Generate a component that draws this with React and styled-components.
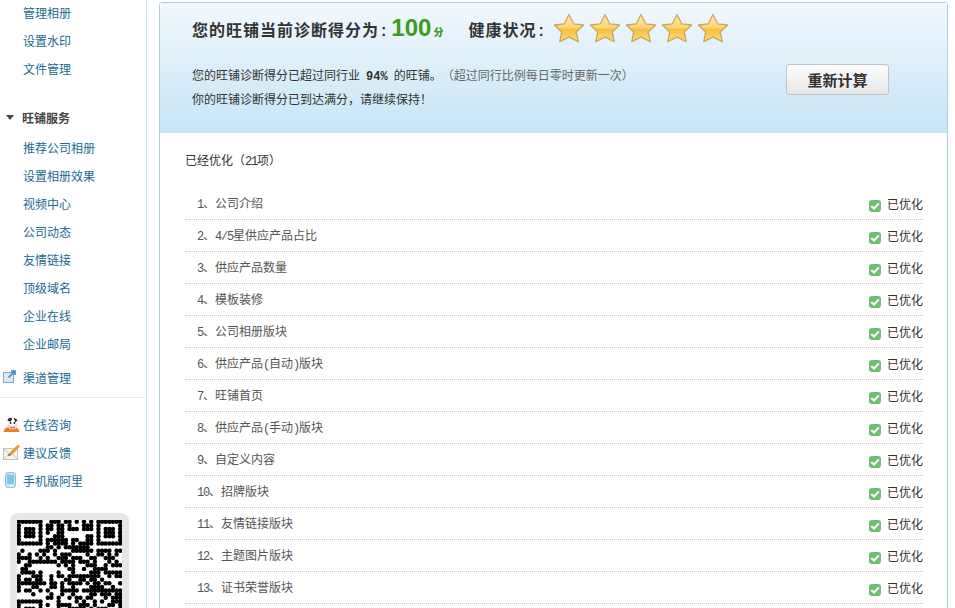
import React from "react";
import styled, { createGlobalStyle } from "styled-components";

const Global = createGlobalStyle`
  html, body { margin: 0; padding: 0; background: #fff; overflow: hidden; }
  body {
    font-family: "Noto Sans CJK SC", "Liberation Sans", sans-serif;
    font-size: 12px;
    color: #333;
    text-spacing-trim: space-all;
  }
`;

const Page = styled.div`
  display: flex;
  width: 955px;
  height: 608px;
  overflow: hidden;
  background: #fff;
`;

const Sidebar = styled.aside`
  flex: 0 0 146px;
  border-right: 1px solid #d5e6ee;
  overflow: hidden;
`;

const NavList = styled.ul`
  list-style: none;
  margin: ${p => p.$top || 0}px 0 0;
  padding: 0;
`;

const NavItem = styled.li`
  display: flex;
  align-items: center;
  height: 28px;
  color: #206a8e;
  padding-left: 3px;
  font-size: 12px;
`;

const NavIcon = styled.span`
  display: flex;
  align-items: center;
  flex: 0 0 20px;
  height: 20px;
`;

const NavSpacer = styled.span`
  flex: 0 0 20px;
`;

const NavHeading = styled.div`
  display: flex;
  align-items: center;
  height: 32px;
  margin-top: 19px;
  padding-left: 6px;
  gap: 8px;
  font-weight: 700;
  font-size: 12px;
  color: #444;
`;

const Caret = styled.i`
  width: 0;
  height: 0;
  border-left: 4.5px solid transparent;
  border-right: 4.5px solid transparent;
  border-top: 5px solid #444;
`;

const Divider = styled.hr`
  border: 0;
  height: 1px;
  margin: 6px 1px 12px 0;
  background: #e2ecf1;
`;

const QrBox = styled.div`
  width: 105px;
  height: 120px;
  margin: 19px 0 0 10px;
  padding: 7px;
  background: #e6e6e6;
  border-radius: 8px;
`;

const QrSheet = styled.div`
  background: #fff;
  width: 105px;
  height: 120px;
`;

const Main = styled.main`
  flex: 0 0 789px;
  box-sizing: border-box;
  height: 640px;
  margin: 2px 0 0 12px;
  border: 1px solid #a9d0de;
  border-radius: 3px 3px 0 0;
`;

const Header = styled.section`
  box-sizing: border-box;
  height: 131px;
  padding: 10px 58px 0 32px;
  background: linear-gradient(#f1f8fc, #c6e5f7);
  border-bottom: 1px solid #fff;
`;

const TitleRow = styled.div`
  display: flex;
  align-items: center;
  height: 30px;
  font-size: 16px;
  font-weight: 700;
  color: #333;
`;

const TitleText = styled.span`
  letter-spacing: 1px;
  margin-top: 2px;
`;

const Colon = styled.span`
  font-family: "Liberation Sans", sans-serif;
  margin-left: 2px;
`;

const Score = styled.b`
  margin-left: 4px;
  font-family: "Liberation Sans", sans-serif;
  font-size: 24px;
  color: #3f9a1c;
`;

const ScoreUnit = styled.b`
  margin: 7px 0 0 2px;
  font-size: 10px;
  color: #3f9a1c;
`;

const Health = styled(TitleText)`
  margin-left: 25px;
  margin-right: 8px;
`;

const Stars = styled.span`
  display: flex;
  gap: 4px;
`;

const InfoRow = styled.div`
  display: flex;
  justify-content: space-between;
  align-items: flex-start;
  margin-top: 20px;
`;

const Lines = styled.div`
  font-size: 12px;
  color: #333;
`;

const Line = styled.div`
  height: 24px;
  line-height: 24px;
`;

const Muted = styled.span`
  color: #666;
`;

const Strong = styled.b`
  font-family: "Liberation Mono", monospace;
  font-size: 12px;
  line-height: 1;
  margin: 0 6px;
`;

const Recalc = styled.button`
  width: 103px;
  height: 31px;
  margin-top: 1px;
  padding: 0;
  border: 1px solid #bcc6cc;
  border-radius: 3px;
  background: linear-gradient(#fdfdfd, #e6e6e6);
  font-family: inherit;
  font-size: 15px;
  font-weight: 700;
  color: #333;
`;

const Body = styled.section`
  padding: 16px 24px 0 25px;
`;

const SectionTitle = styled.div`
  height: 20px;
  line-height: 20px;
  color: #333;
`;

const Rows = styled.ol`
  list-style: none;
  margin: 18px 0 0;
  padding: 0;
`;

const Row = styled.li`
  box-sizing: border-box;
  display: flex;
  align-items: center;
  justify-content: space-between;
  height: 32px;
  padding: 0 0 1px 12px;
  border-bottom: 1px dotted #c6c6c6;
  color: #555;
`;

const Name = styled.span`
  margin-top: -1px;
`;

const Latin = styled.span`
  font-family: "Liberation Mono", monospace;
  font-size: 12px;
  line-height: 1;
  letter-spacing: -1.2px;
`;

const Status = styled.span`
  display: flex;
  align-items: center;
  gap: 6px;
  color: #333;
  margin-top: 1px;
`;

const CheckWrap = styled.span`
  display: flex;
  margin-top: 4px;
`;

const StarIcon = () => (
  <svg width="32" height="30" viewBox="0 0 32 30" aria-hidden="true">
    <defs>
      <linearGradient id="starFill" x1="0" y1="0" x2="0" y2="1">
        <stop offset="0" stopColor="#ffeeb0" />
        <stop offset="0.48" stopColor="#fdd670" />
        <stop offset="0.55" stopColor="#f8bd42" />
        <stop offset="1" stopColor="#fedd7c" />
      </linearGradient>
    </defs>
    <path
      d="M16 1.5 L20.6 10.8 L30.6 12 L23.3 19 L25.2 28.6 L16 24.2 L6.8 28.6 L8.7 19 L1.4 12 L11.4 10.8 Z"
      fill="url(#starFill)"
      stroke="#c9a75e"
      strokeWidth="1.3"
      strokeLinejoin="round"
    />
  </svg>
);

const CheckIcon = () => (
  <svg width="12" height="12" viewBox="0 0 12 12" aria-hidden="true">
    <rect width="12" height="12" rx="3" fill="#6bbf6e" />
    <path d="M2.4 6 L5 8.6 L9.8 3.4" fill="none" stroke="#fff" strokeWidth="2" />
  </svg>
);

const ExternalIcon = () => (
  <svg width="14" height="14" viewBox="0 0 14 14" aria-hidden="true">
    <rect x="0.5" y="2.5" width="10" height="10" fill="#dbe7f2" stroke="#8ba6c0" />
    <path d="M5.5 7.5 L11 2 M8 1 H12 V5" fill="none" stroke="#3e86c6" strokeWidth="1.6" />
  </svg>
);

const MascotIcon = () => (
  <svg width="17" height="17" viewBox="0 0 17 17" aria-hidden="true">
    <path d="M0.5 16 C1.5 12 3 11 8.5 11 C14 11 15.5 12 16.5 16 Z" fill="#ec7f22" />
    <ellipse cx="9.5" cy="9.5" rx="5" ry="4" fill="#f8dccd" />
    <ellipse cx="9.5" cy="5.5" rx="4.6" ry="3.5" fill="#fff" />
    <path d="M4.5 5 C5 2 8 1 9 2.5 L8 5.5 Z M10.5 1.5 L14.5 4 L12.5 6.5 Z" fill="#222" />
    <circle cx="7.6" cy="7" r="0.9" fill="#222" />
    <circle cx="11.4" cy="7" r="0.9" fill="#222" />
    <path d="M7 11 C8.5 12.2 10.5 12.2 12 11" fill="none" stroke="#b5473a" />
  </svg>
);

const MailIcon = () => (
  <svg width="19" height="16" viewBox="0 0 19 16" aria-hidden="true">
    <rect x="0.5" y="4.5" width="14" height="11" fill="#f5f5f0" stroke="#c4c4bc" />
    <path d="M1 5 L7.5 11 L14 5 M1 15 L6 9.5 M14 15 L9 9.5" fill="none" stroke="#c4c4bc" />
    <path d="M6.5 11 L16 1.5" stroke="#ee9a2c" strokeWidth="3" />
    <path d="M5.5 12 L7 10" stroke="#555" strokeWidth="1.2" />
  </svg>
);

const TabletIcon = () => (
  <svg width="20" height="16" viewBox="0 0 20 16" aria-hidden="true">
    <rect x="2.5" y="0.5" width="10" height="15" rx="2" fill="#cfe8f1" stroke="#8fc3d6" />
    <rect x="4" y="2.5" width="7" height="9.5" fill="#7cc8e8" />
    <circle cx="7.5" cy="13.8" r="0.9" fill="#fff" />
  </svg>
);

// Dot pattern standing in for the QR code's data modules.
const QR_SIZE = 29;
const inFinder = (x, y, ox, oy) => x >= ox && x < ox + 7 && y >= oy && y < oy + 7;
const finderOn = (x, y, ox, oy) => {
  const dx = x - ox;
  const dy = y - oy;
  return dx === 0 || dx === 6 || dy === 0 || dy === 6 || (dx >= 2 && dx <= 4 && dy >= 2 && dy <= 4);
};
const isDark = (x, y) => {
  for (const [ox, oy] of [[0, 0], [22, 0], [0, 22]]) {
    if (inFinder(x, y, ox, oy)) return finderOn(x, y, ox, oy);
  }
  if ((x < 8 && y < 8) || (x > 20 && y < 8) || (x < 8 && y > 20)) return false;
  const h = Math.sin(x * 12.9898 + y * 78.233) * 43758.5453;
  return h - Math.floor(h) > 0.5;
};

const QrCode = () => {
  const dots = [];
  for (let y = 0; y < QR_SIZE; y++) {
    for (let x = 0; x < QR_SIZE; x++) {
      if (isDark(x, y)) dots.push(<circle key={`${x}-${y}`} cx={x + 0.5} cy={y + 0.5} r="0.62" />);
    }
  }
  return (
    <svg width="105" height="105" viewBox="0 0 29 29" fill="#000" aria-hidden="true">
      {dots}
    </svg>
  );
};

const withLatin = label =>
  label.split(/([0-9/()]+)/).map((part, i) => (i % 2 ? <Latin key={i}>{part}</Latin> : part));

const topLinks = ["管理相册", "设置水印", "文件管理"];
const serviceLinks = ["推荐公司相册", "设置相册效果", "视频中心", "公司动态", "友情链接", "顶级域名", "企业在线", "企业邮局"];
const helpLinks = [
  ["在线咨询", <MascotIcon key="m" />],
  ["建议反馈", <MailIcon key="e" />],
  ["手机版阿里", <TabletIcon key="t" />],
];
const items = [
  "公司介绍", "4/5星供应产品占比", "供应产品数量", "模板装修", "公司相册版块",
  "供应产品(自动)版块", "旺铺首页", "供应产品(手动)版块", "自定义内容", "招牌版块",
  "友情链接版块", "主题图片版块", "证书荣誉版块",
];

export default function App() {
  return (
    <Page>
      <Global />
      <Sidebar>
        <NavList $top={-2}>
          {topLinks.map(t => (
            <NavItem key={t}><NavSpacer />{t}</NavItem>
          ))}
        </NavList>
        <NavHeading><Caret />旺铺服务</NavHeading>
        <NavList>
          {serviceLinks.map(t => (
            <NavItem key={t}><NavSpacer />{t}</NavItem>
          ))}
        </NavList>
        <NavList $top={6}>
          <NavItem><NavIcon><ExternalIcon /></NavIcon>渠道管理</NavItem>
        </NavList>
        <Divider />
        <NavList>
          {helpLinks.map(([t, icon]) => (
            <NavItem key={t}><NavIcon>{icon}</NavIcon>{t}</NavItem>
          ))}
        </NavList>
        <QrBox><QrSheet><QrCode /></QrSheet></QrBox>
      </Sidebar>
      <Main>
        <Header>
          <TitleRow>
            <TitleText>您的旺铺当前诊断得分为<Colon>:</Colon></TitleText>
            <Score>100</Score>
            <ScoreUnit>分</ScoreUnit>
            <Health>健康状况<Colon>:</Colon></Health>
            <Stars>
              {[0, 1, 2, 3, 4].map(i => <StarIcon key={i} />)}
            </Stars>
          </TitleRow>
          <InfoRow>
            <Lines>
              <Line>您的旺铺诊断得分已超过同行业<Strong>94%</Strong>的旺铺。<Muted>（超过同行比例每日零时更新一次）</Muted></Line>
              <Line>你的旺铺诊断得分已到达满分，请继续保持！</Line>
            </Lines>
            <Recalc type="button">重新计算</Recalc>
          </InfoRow>
        </Header>
        <Body>
          <SectionTitle>已经优化（<Latin>21</Latin>项）</SectionTitle>
          <Rows>
            {items.map((label, i) => (
              <Row key={label}>
                <Name><Latin>{i + 1}</Latin>、{withLatin(label)}</Name>
                <Status><CheckWrap><CheckIcon /></CheckWrap>已优化</Status>
              </Row>
            ))}
          </Rows>
        </Body>
      </Main>
    </Page>
  );
}
